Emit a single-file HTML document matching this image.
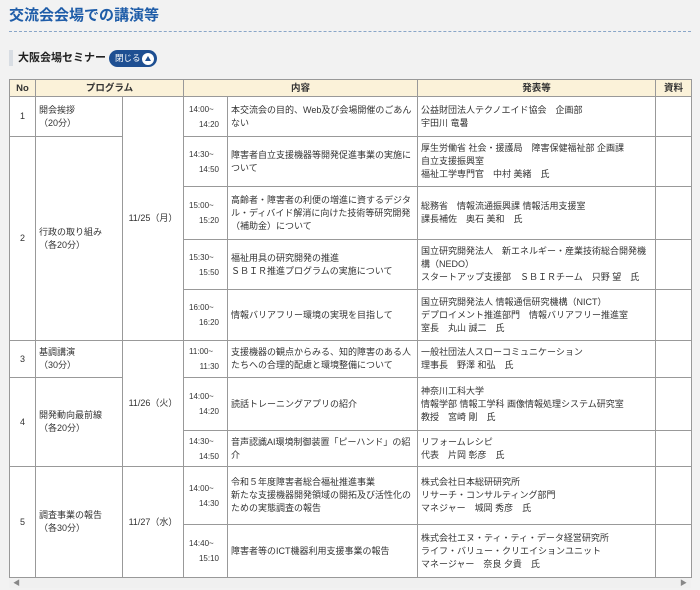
<!DOCTYPE html>
<html><head><meta charset="utf-8"><style>
body{margin:0;width:700px;height:590px;background:#f2f2f2;font-family:"Liberation Sans","Noto Sans CJK JP",sans-serif;color:#333;overflow:hidden;position:relative}
h1{position:absolute;left:9px;top:4px;margin:0;font-size:15px;color:#1e5ca8;font-weight:bold}
.dash{position:absolute;left:9px;right:9px;top:31px;border-top:1px dashed #8aa6c8}
.sub{position:absolute;left:9px;top:50px;height:16px;border-left:4px solid #d8dde3;padding-left:5px;font-size:11px;line-height:16px;font-weight:bold;color:#222}
.btn{position:absolute;left:109px;top:50px;width:48px;height:17px;border-radius:9px;background:#1e4f92;color:#fff;font-size:8.5px;line-height:17px;padding-left:6px;box-sizing:border-box}
.btn i{position:absolute;right:3px;top:2.5px;width:12px;height:12px;border-radius:6px;background:#fff}
.btn i:after{content:"";position:absolute;left:3px;top:3px;border-left:3px solid transparent;border-right:3px solid transparent;border-bottom:5px solid #1e4f92}
.wrap{position:absolute;left:9px;top:79px;width:682px;height:509px;background:#fafafa}
table{border-collapse:collapse;table-layout:fixed;width:682px;background:#fff;font-size:9px;line-height:13px}
td,th{border:1px solid #999;padding:0 3px;vertical-align:middle;overflow:hidden}
th{background:#fbf2d9;font-weight:bold;height:16px;font-size:9.5px}
.c{text-align:center}
.t{text-align:right;font-size:8px;padding:0 8px 0 3px;line-height:15px}
.t span{display:block}
.t span:first-child{text-align:left;padding-left:2px}
.sb{position:absolute;left:0;top:499px;width:682px;height:10px;background:#f0f0f0;font-size:7px;color:#888}
</style></head><body>
<h1>交流会会場での講演等</h1>
<div class="dash"></div>
<div class="sub">大阪会場セミナー</div>
<div class="btn">閉じる<i></i></div>
<div class="wrap">
<table>
<colgroup><col style="width:26px"><col style="width:87px"><col style="width:61px"><col style="width:44px"><col style="width:190px"><col style="width:238px"><col style="width:36px"></colgroup>
<tr><th>No</th><th colspan="2">プログラム</th><th colspan="2">内容</th><th>発表等</th><th>資料</th></tr>
<tr style="height:40px"><td class="c">1</td><td>開会挨拶<br>（20分）</td><td rowspan="5" class="c">11/25（月）</td><td class="t"><span>14:00~</span><span>14:20</span></td><td>本交流会の目的、Web及び会場開催のごあんない</td><td>公益財団法人テクノエイド協会　企画部<br>宇田川 竜暑</td><td></td></tr>
<tr style="height:50px"><td rowspan="4" class="c">2</td><td rowspan="4">行政の取り組み<br>（各20分）</td><td class="t"><span>14:30~</span><span>14:50</span></td><td>障害者自立支援機器等開発促進事業の実施について</td><td>厚生労働省 社会・援護局　障害保健福祉部 企画課<br>自立支援振興室<br>福祉工学専門官　中村 美緒　氏</td><td></td></tr>
<tr style="height:53px"><td class="t"><span>15:00~</span><span>15:20</span></td><td>高齢者・障害者の利便の増進に資するデジタル・ディバイド解消に向けた技術等研究開発（補助金）について</td><td>総務省　情報流通振興課 情報活用支援室<br>課長補佐　奥石 美和　氏</td><td></td></tr>
<tr style="height:50px"><td class="t"><span>15:30~</span><span>15:50</span></td><td>福祉用具の研究開発の推進<br>ＳＢＩＲ推進プログラムの実施について</td><td>国立研究開発法人　新エネルギー・産業技術総合開発機構（NEDO）<br><span style="white-space:nowrap">スタートアップ支援部　ＳＢＩＲチーム　只野 望　氏</span></td><td></td></tr>
<tr style="height:51px"><td class="t"><span>16:00~</span><span>16:20</span></td><td>情報バリアフリー環境の実現を目指して</td><td>国立研究開発法人 情報通信研究機構（NICT）<br>デプロイメント推進部門　情報バリアフリー推進室<br>室長　丸山 誠二　氏</td><td></td></tr>
<tr style="height:37px"><td class="c">3</td><td>基調講演<br>（30分）</td><td rowspan="3" class="c">11/26（火）</td><td class="t"><span>11:00~</span><span>11:30</span></td><td>支援機器の観点からみる、知的障害のある人たちへの合理的配慮と環境整備について</td><td>一般社団法人スローコミュニケーション<br>理事長　野澤 和弘　氏</td><td></td></tr>
<tr style="height:53px"><td rowspan="2" class="c">4</td><td rowspan="2">開発動向最前線<br>（各20分）</td><td class="t"><span>14:00~</span><span>14:20</span></td><td>読話トレーニングアプリの紹介</td><td>神奈川工科大学<br>情報学部 情報工学科 画像情報処理システム研究室<br>教授　宮崎 剛　氏</td><td></td></tr>
<tr style="height:36px"><td class="t"><span>14:30~</span><span>14:50</span></td><td>音声認識AI環境制御装置「ピーハンド」の紹介</td><td>リフォームレシピ<br>代表　片岡 彰彦　氏</td><td></td></tr>
<tr style="height:58px"><td rowspan="2" class="c">5</td><td rowspan="2">調査事業の報告<br>（各30分）</td><td rowspan="2" class="c">11/27（水）</td><td class="t"><span>14:00~</span><span>14:30</span></td><td>令和５年度障害者総合福祉推進事業<br>新たな支援機器開発領域の開拓及び活性化のための実態調査の報告</td><td>株式会社日本総研研究所<br>リサーチ・コンサルティング部門<br>マネジャー　城岡 秀彦　氏</td><td></td></tr>
<tr style="height:53px"><td class="t"><span>14:40~</span><span>15:10</span></td><td>障害者等のICT機器利用支援事業の報告</td><td>株式会社エヌ・ティ・ティ・データ経営研究所<br>ライフ・バリュー・クリエイションユニット<br>マネージャー　奈良 夕貴　氏</td><td></td></tr>
</table>
<div class="sb"><span style="position:absolute;left:4px;top:0">◀</span><span style="position:absolute;right:4px;top:0">▶</span></div>
</div>
</body></html>
